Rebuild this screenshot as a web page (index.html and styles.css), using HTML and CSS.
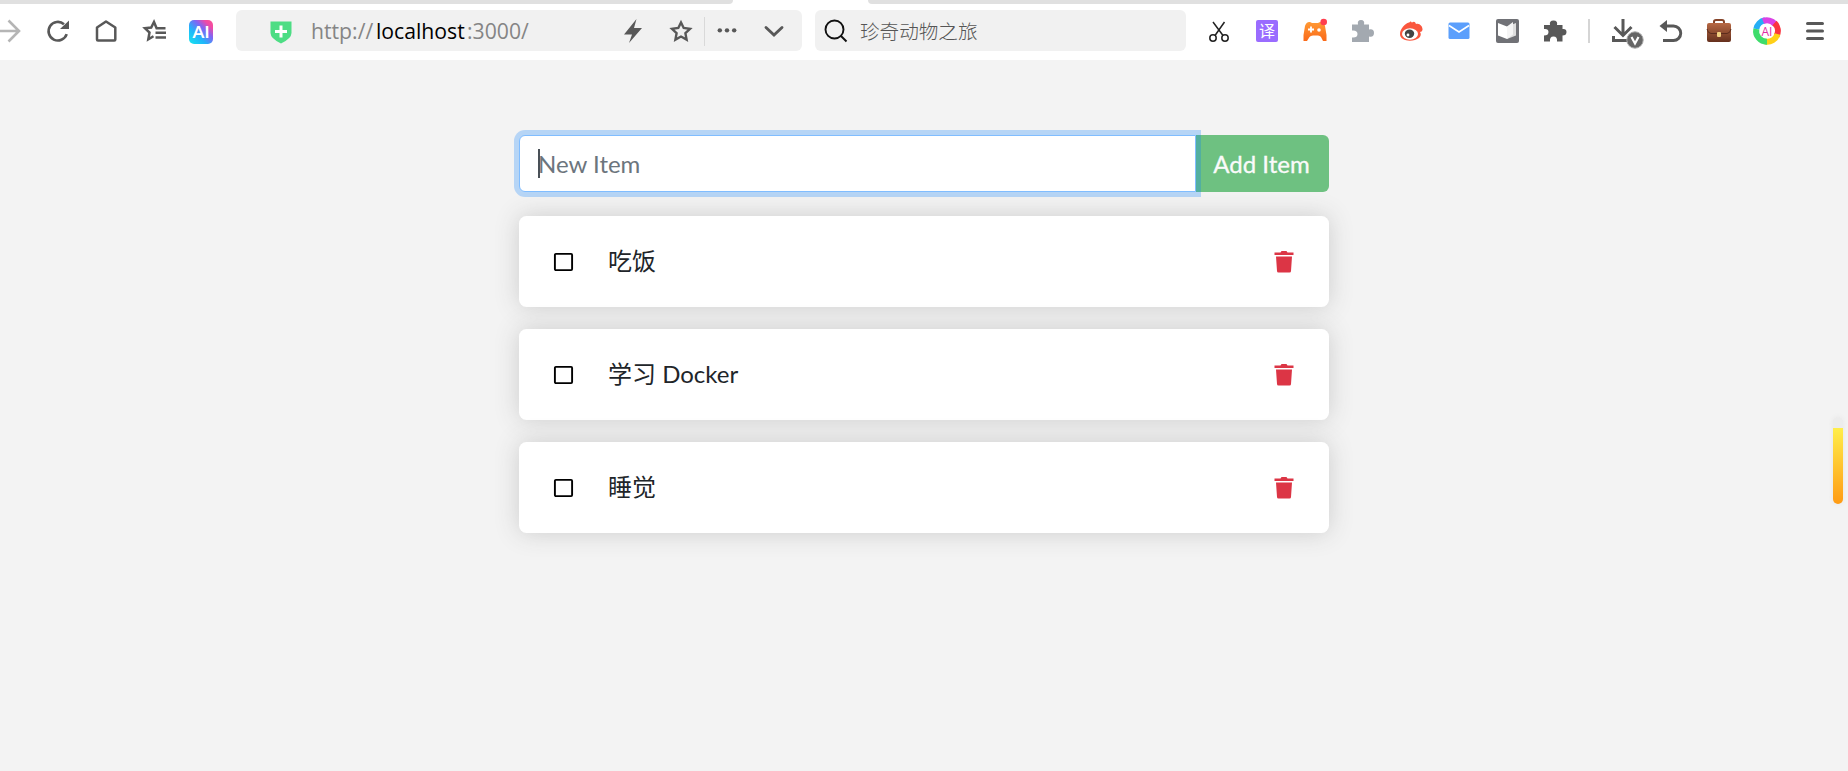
FILE: index.html
```html
<!DOCTYPE html>
<html lang="zh-CN">
<head>
<meta charset="utf-8">
<title>Todo App</title>
<link rel="stylesheet" href="styles.css">
</head>
<body>
<div class="tabstrip"><span class="tab-left"></span><span class="tab-active"></span><span class="tab-right"></span></div>
<header class="toolbar">
  <nav class="icons nav-icons">
    <svg class="icon" viewBox="-24 -27 48 56"><path d="M-14 0H9M-1.500-10.500L9 0-1.500 10.500" fill="none" stroke="#b5b5b5" stroke-width="2.600"/></svg>
    <svg class="icon" viewBox="-24 -27 48 56"><path d="M8.700 3.200A9.300 9.300 0 1 1 6-6.800" fill="none" stroke="#585858" stroke-width="2.600"/><path d="M11-10.500V-2H2z" fill="#585858"/></svg>
    <svg class="icon" viewBox="-24 -27 48 56"><path d="M-9-3.500L0-9.500 9.300-3.500V8.500Q9.300 9.500 8.300 9.500H-8Q-9 9.500-9 8.500z" fill="none" stroke="#585858" stroke-width="2.500" stroke-linejoin="round"/></svg>
    <svg class="icon" viewBox="-24 -27 48 56"><path d="M11.500-2.800H2.600L0-9-2.800-3.400-9-2.700-4.500 1.500-5.700 8.400-.5 5.300" fill="none" stroke="#585858" stroke-width="2.500"/><path d="M1.500 1.800H12M1.500 6.500H12" stroke="#585858" stroke-width="2.500"/></svg>
    <svg class="icon" viewBox="-24 -27 48 56"><defs><linearGradient id="ai" x1="0" y1="1" x2="1" y2="0"><stop offset="0" stop-color="#16e6ee"/><stop offset=".35" stop-color="#20b5fa"/><stop offset=".62" stop-color="#8065f4"/><stop offset=".82" stop-color="#f249a5"/><stop offset="1" stop-color="#f65592"/></linearGradient></defs><rect x="-13" y="-11" width="24" height="24" rx="5" fill="url(#ai)"/><text x="-1" y="6.500" text-anchor="middle" class="ai-label">AI</text></svg>
  </nav>
  <div class="address">
    <svg class="shield" width="22" height="24" viewBox="0 0 22 24"><path d="M.5 1.500H21.500V13Q21.500 18.500 11 23.500Q.5 18.500 .5 13z" fill="#4ddd84"/><path d="M5 11.500H17M11 5.500V17.500" stroke="#fff" stroke-width="3"/></svg>
    <div class="url"><span class="scheme">http://</span><span class="host">localhost</span><span class="port">:3000/</span></div>
    <div class="icons">
      <svg class="icon" viewBox="-24 -27 48 56"><path d="M3.500-12L-9 3.500H-1L-4 12 9-3H1z" fill="#585858"/></svg>
      <svg class="icon star" viewBox="-24 -27 48 56"><path d="M0-8.500L2.700-3 9-2.200 4.400 2.200 5.600 8.600 0 5.500-5.600 8.600-4.400 2.200-9-2.200-2.700-3z" fill="none" stroke="#585858" stroke-width="2.400"/></svg>
      <span class="rule"></span>
      <svg class="icon dots" viewBox="-24 -27 48 56"><g fill="#585858"><circle cx="-7.500" cy="-.700" r="2.300"/><circle cy="-.700" r="2.300"/><circle cx="7.500" cy="-.700" r="2.300"/></g></svg>
      <svg class="icon" viewBox="-24 -27 48 56"><path d="M-8-3.500L0 4 8-3.500" fill="none" stroke="#585858" stroke-width="2.900" stroke-linecap="round"/></svg>
    </div>
  </div>
  <div class="search">
    <svg width="24" height="24" viewBox="0 0 24 24"><g fill="none" stroke="#111" stroke-width="1.900"><circle cx="10.500" cy="10.500" r="9"/><path d="M17 17L22.500 22.500"/></g></svg>
    <span>珍奇动物之旅</span>
  </div>
  <div class="icons tools">
    <svg class="icon" viewBox="-24 -27 48 56"><g fill="none" stroke="#222" stroke-width="1.500"><circle cx="-6" cy="7" r="3.200"/><circle cx="6" cy="7" r="3.200"/><path d="M-6-9L4 4.500M5.500-9L-4 4.500"/></g></svg>
    <svg class="icon" viewBox="-24 -27 48 56"><rect x="-11" y="-11" width="22" height="22" rx="2" fill="#9a6cff"/><text y="6" text-anchor="middle" class="translate-label">译</text></svg>
    <svg class="icon" viewBox="-24 -27 48 56"><defs><linearGradient id="pad" x2="0" y2="1"><stop stop-color="#ff9a35"/><stop offset="1" stop-color="#fa6919"/></linearGradient></defs><path d="M-5-9Q-8.500-9.500-10-5L-11.500 4V10H-8L-5.500 6Q-4.500 4.500-2 4.500H3Q5 4.500 6 6L8 10H11.500V4L10-5Q9-9 5-9L3-8H-3z" fill="url(#pad)"/><path d="M-7-1.500H-1M-4-4.500V1.500" stroke="#fff" stroke-width="1.800"/><circle cx="4" cy="-1" r="1.800" fill="#fff"/><circle cx="8.700" cy="-9" r="3.300" fill="#ff3e4e"/></svg>
    <svg class="icon" viewBox="-24 -27 48 56"><path d="M-11-6.500H-5Q-6-11-2-11Q2-11 1-6.500H6V-1.500Q11-2.500 11 2T6 5.500V11H-11V6.500Q-5.500 7-5.500 3T-11-.5z" fill="#a3a9b0"/></svg>
    <svg class="icon" viewBox="-24 -27 48 56"><path d="M-11 3C-11-2-6-7.500-2-8.500C0-10-.5-10 1-8.500C3-10 4-9.500 5-7C8-8.500 12-5 11.500-1Q11 1 9 1Q11 4 8 7C3 11-11 11-11 3z" fill="#fa573e"/><ellipse cx="-1" cy="3" rx="8" ry="5.700" fill="#fff"/><ellipse cx="-1.500" cy="2.800" rx="4.700" ry="4.200" fill="#444"/><circle cx="-3" cy="4" r="1.400" fill="#fff"/></svg>
    <svg class="icon" viewBox="-24 -27 48 56"><rect x="-10.500" y="-8.500" width="21" height="16.500" rx="1.500" fill="#5b9ffc"/><path d="M-10-5.500L0 1 10-5.500" fill="none" stroke="#fff" stroke-width="1.600"/></svg>
    <svg class="icon" viewBox="-24 -27 48 56"><rect x="-11" y="-12" width="23" height="24" rx="2" fill="#707176"/><path d="M-9-8L0-4.500V8L-9 4.500z" fill="#fff"/><path d="M0-4.500L9-8V4.500L0 8z" fill="#dedede"/><path d="M0-4.500L6-9V3.500L0 8z" fill="#f5f5f5"/></svg>
    <svg class="icon" viewBox="-24 -27 48 56"><path d="M-11-6H-5Q-6-10.500-1.500-10.500T2-6H7.500V-2Q11.500-2.500 11.500 1T7.500 4.500V10.500H2Q2.500 5.500-1.500 5.500T-5 10.500H-11V4.500Q-6.500 4.500-6.500 1T-11-2z" fill="#585858"/></svg>
    <span class="separator"></span>
    <svg class="icon" viewBox="-24 -27 48 56"><path d="M0-12V4M-8.500-4L0 4.500 8.500-4M-9.500 5V9.500H4" fill="none" stroke="#585858" stroke-width="3"/><circle cx="12" cy="9" r="8.200" fill="#666" stroke="#aaa"/><path d="M8.500 6L12 12.500 15.500 6" fill="none" stroke="#fff" stroke-width="2.200"/></svg>
    <svg class="icon" viewBox="-24 -27 48 56"><path d="M-7-5H2.500A7.200 7.200 0 0 1 2.500 9.500H-8" fill="none" stroke="#585858" stroke-width="2.900"/><path d="M-11.500-5L-4-11V1z" fill="#585858"/></svg>
    <svg class="icon" viewBox="-24 -27 48 56"><defs><linearGradient id="bag" x2="0" y2="1"><stop stop-color="#b76843"/><stop offset="1" stop-color="#65301d"/></linearGradient></defs><path d="M-5-7V-9.500Q-5-11-3-11H3Q5-11 5-9V-7" fill="none" stroke="#854429" stroke-width="2"/><rect x="-12" y="-8" width="24" height="19" rx="2" fill="url(#bag)"/><path d="M-12-2Q-11 2.500-8 2.500H8Q11 2.500 12-2" fill="none" stroke="#5c2c1c"/><rect x="-2" y="1" width="4" height="5" rx="1" fill="#f1d081"/></svg>
    <svg class="icon" viewBox="-24 -27 48 56"><g fill="none" stroke-width="6"><path d="M-10.700-2A10.700 10.700 0 0 1-2-10.700" stroke="#25aef5"/><path d="M-4-10A10.700 10.700 0 0 1 8-7" stroke="#da42e5"/><path d="M7.500-8A10.700 10.700 0 0 1 9.500 5" stroke="#fa3340"/><path d="M10.500 3A10.700 10.700 0 0 1-2 10.500" stroke="#ffd018"/><path d="M0 10.700A10.700 10.700 0 0 1-10.700-2" stroke="#3edc6b"/></g><text y="4.500" text-anchor="middle" class="ring-label">AI</text></svg>
    <svg class="icon" viewBox="-24 -27 48 56"><path d="M-7.500-7.500H7.500M-7.500 0H7.500M-7.500 7.500H7.500" stroke="#585858" stroke-width="3" stroke-linecap="round"/></svg>
  </div>
</header>
<main class="container">
  <form class="new-item">
    <div class="field"><input class="text-input" type="text" placeholder="New Item"><span class="caret"></span></div>
    <button class="add" type="button">Add Item</button>
  </form>
  <div class="item"><svg class="check" viewBox="0 0 21 20"><rect x="1.900" y="1.900" width="17.200" height="16.200" rx="1" fill="none" stroke="#000" stroke-width="1.900"/></svg><span class="name">吃饭</span><svg class="trash" viewBox="0 0 20 24"><path d="M.5 2.500H6.500L7.500 1H12.500L13.500 2.500H19.500V5H.5zM2 6.500H18L17 21Q17 22.500 15.500 22.500H4.500Q3 22.500 3 21z" fill="#dc3545"/></svg></div>
  <div class="item"><svg class="check" viewBox="0 0 21 20"><rect x="1.900" y="1.900" width="17.200" height="16.200" rx="1" fill="none" stroke="#000" stroke-width="1.900"/></svg><span class="name">学习 Docker</span><svg class="trash" viewBox="0 0 20 24"><path d="M.5 2.500H6.500L7.500 1H12.500L13.500 2.500H19.500V5H.5zM2 6.500H18L17 21Q17 22.500 15.500 22.500H4.500Q3 22.500 3 21z" fill="#dc3545"/></svg></div>
  <div class="item"><svg class="check" viewBox="0 0 21 20"><rect x="1.900" y="1.900" width="17.200" height="16.200" rx="1" fill="none" stroke="#000" stroke-width="1.900"/></svg><span class="name">睡觉</span><svg class="trash" viewBox="0 0 20 24"><path d="M.5 2.500H6.500L7.500 1H12.500L13.500 2.500H19.500V5H.5zM2 6.500H18L17 21Q17 22.500 15.500 22.500H4.500Q3 22.500 3 21z" fill="#dc3545"/></svg></div>
</main>
<div class="meter"><div class="meter-fill"></div></div>
</body>
</html>
```
FILE: styles.css
```css
* { box-sizing: border-box; }
body { margin: 0; height: 771px; overflow: hidden; background: #f3f3f3; font-family: Lato, "Noto Sans CJK SC", sans-serif; font-size: 24px; color: #212529; }
.tabstrip { display: flex; height: 4px; background: #fff; }
.tab-left { width: 733px; background: #e0e0e0; border-bottom-right-radius: 4px; }
.tab-active { width: 135px; }
.tab-right { flex: 1; background: #e0e0e0; border-bottom-left-radius: 4px; }
.toolbar { display: flex; height: 56px; background: #fff; overflow: hidden; }
.icons { display: flex; flex: none; }
.icon { display: block; flex: none; width: 48px; height: 56px; }
.nav-icons { margin-left: -14px; width: 250px; }
.address { display: flex; flex: none; align-items: center; width: 566px; height: 41px; margin-top: 6px; padding-left: 34px; border-radius: 6px; background: #f1f1f1; }
.address .icons { height: 56px; margin-left: auto; margin-right: 4px; margin-top: 3px; }
.address .star { margin-right: -1px; }
.address .dots { width: 46px; margin-left: -1px; }
.rule { width: 1px; height: 29px; margin: 13px 0 0; background: #d9d9d9; }
.shield { flex: none; margin-top: 2px; }
.url { display: flex; margin-left: 19px; padding-top: 1px; font-family: "Open Sans", sans-serif; font-size: 21.2px; line-height: 30px; color: #858585; white-space: nowrap; }
.scheme { width: 65px; }
.host { width: 91px; color: #000; }
.search { display: flex; flex: none; align-items: center; width: 371px; height: 41px; margin: 6px 0 0 13px; padding-left: 9px; gap: 12px; border-radius: 6px; background: #f1f1f1; font-family: "Noto Sans CJK SC", sans-serif; font-size: 19.6px; font-weight: 300; color: #555; }
.tools { margin-left: 9px; }
.separator { width: 2px; height: 24px; margin: 15px 9px 0; background: #d5d5d5; }
.ai-label { font: 700 17px Lato, sans-serif; fill: #fff; }
.translate-label { font: 16px "Noto Sans CJK SC", sans-serif; fill: #fff; }
.ring-label { font: 12px "Open Sans", sans-serif; fill: #e22ba4; }
.container { width: 810px; margin: 75px auto 0; }
.new-item { display: flex; height: 57px; margin-bottom: 24px; }
.field { position: relative; z-index: 1; flex: 1; }
.text-input { display: block; width: 100%; height: 57px; padding: 0 18px 1px; border: 1px solid #80bdff; border-radius: 6px 0 0 6px; outline: 0; background: #fff; box-shadow: 0 0 0 5px rgba(0, 123, 255, .25); font: 24px Lato, sans-serif; }
.text-input::placeholder { color: #6c757d; opacity: 1; }
.caret { position: absolute; left: 19px; top: 14px; width: 2px; height: 29px; background: #495057; }
.add { width: 133px; padding: 0 2px 1px 0; border: 0; border-radius: 0 6px 6px 0; background: #28a745; color: #fff; font: 24px Lato, sans-serif; -webkit-text-stroke: .3px #fff; opacity: .65; }
.item { display: flex; align-items: center; height: 91px; margin-bottom: 22px; padding: 0 35px 0 34px; border-radius: 7.5px; background: #fff; box-shadow: 0 0 24px #ccc; }
.check { width: 21px; height: 20px; }
.name { flex: 1; margin-left: 34px; padding-bottom: 2px; line-height: 36px; }
.trash { width: 20px; height: 24px; }
.meter { position: fixed; left: 1833px; top: 417px; display: flex; align-items: flex-end; width: 10px; height: 87px; border-radius: 5px; background: #ececec; box-shadow: 0 0 5px #e6e6e6; overflow: hidden; }
.meter-fill { width: 10px; height: 76px; background: linear-gradient(#ffee4a, #ff9b14); }
```
